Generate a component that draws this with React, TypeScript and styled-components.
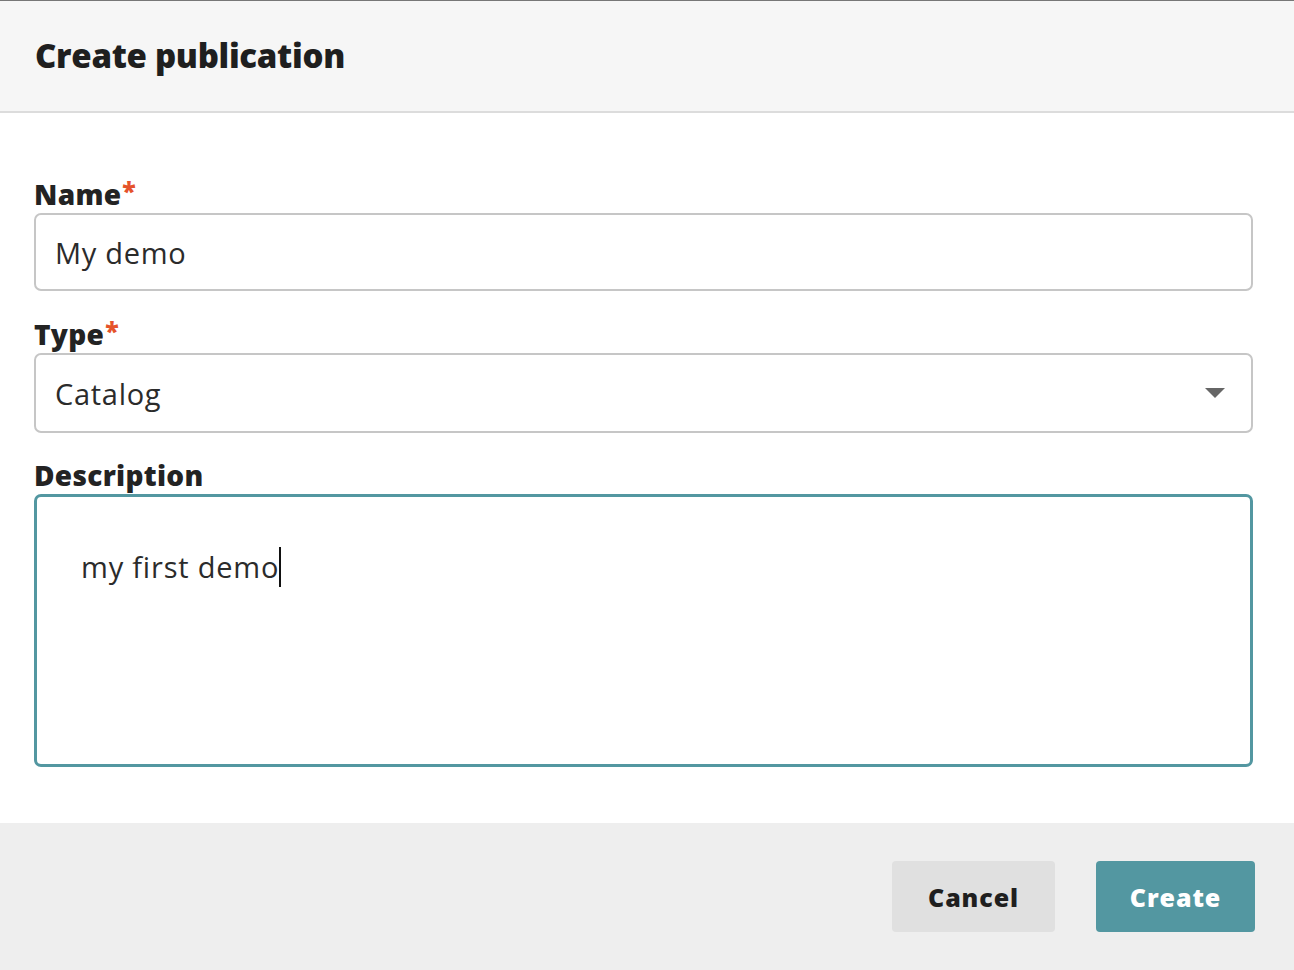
import React from "react";
import styled, { createGlobalStyle } from "styled-components";

const GlobalStyle = createGlobalStyle`
  html, body {
    margin: 0;
    padding: 0;
    background: #ffffff;
  }
  body {
    font-family: "Open Sans", "Noto Sans", sans-serif;
    color: #222222;
  }
  * { box-sizing: border-box; }
`;

const Dialog = styled.div`
  display: flex;
  flex-direction: column;
  width: 100%;
  height: 970px;
  border-top: 1px solid #777777;
  background: #ffffff;
`;

const Header = styled.header`
  flex-shrink: 0;
  display: flex;
  align-items: center;
  height: 112px;
  padding: 0 35px 2px;
  background: #f6f6f6;
  border-bottom: 2px solid #dcdcdc;
`;

const Title = styled.h1`
  margin: 0;
  font-size: 33px;
  font-weight: 800;
  color: #1f1f1f;
  letter-spacing: -0.3px;
`;

const Body = styled.div`
  flex-shrink: 0;
  display: flex;
  flex-direction: column;
  padding: 64px 41px 56px 34px;
`;

const Label = styled.label<{ $top?: number }>`
  display: block;
  margin: ${(p) => p.$top ?? 0}px 0 2px;
  height: 34px;
  line-height: 34px;
  font-size: 28px;
  font-weight: 800;
  letter-spacing: 0.3px;
  color: #232323;
`;

const Required = styled.span`
  color: #e5532b;
  font-size: 25px;
  font-weight: 800;
  vertical-align: top;
  line-height: 26px;
  margin-left: 1px;
`;

const Field = styled.div<{ $h: number }>`
  position: relative;
  flex-shrink: 0;
  display: flex;
  align-items: center;
  height: ${(p) => p.$h}px;
  padding: 0 19px;
  border: 2px solid #c6c6c6;
  border-radius: 7px;
  font-size: 29px;
  letter-spacing: 0.7px;
  color: #2b2b2b;
`;

const Caret = styled.span`
  position: absolute;
  right: 26px;
  top: 50%;
  width: 0;
  height: 0;
  margin-top: -5px;
  border-left: 10px solid transparent;
  border-right: 10px solid transparent;
  border-top: 10px solid #666666;
`;

const TextArea = styled.div`
  flex-shrink: 0;
  height: 273px;
  padding: 50px 44px;
  border: 3px solid #5397a1;
  border-radius: 7px;
  font-size: 29px;
  line-height: 40px;
  letter-spacing: 0.8px;
  color: #2b2b2b;
`;

const Cursor = styled.span`
  display: inline-block;
  width: 2px;
  height: 40px;
  vertical-align: top;
  background: #111111;
`;

const Footer = styled.footer`
  display: flex;
  justify-content: flex-end;
  align-items: flex-start;
  gap: 41px;
  flex: 1;
  padding: 38px 39px 0 0;
  background: #eeeeee;
`;

const Button = styled.button<{ $primary?: boolean; $w: number }>`
  width: ${(p) => p.$w}px;
  height: 71px;
  border: none;
  border-radius: 4px;
  font-family: inherit;
  font-size: 25px;
  font-weight: 800;
  letter-spacing: 0.9px;
  cursor: pointer;
  background: ${(p) => (p.$primary ? "#5397a1" : "#e0e0e0")};
  color: ${(p) => (p.$primary ? "#ffffff" : "#1f1f1f")};
`;

export default function App() {
  return (
    <>
      <GlobalStyle />
      <Dialog>
        <Header>
          <Title>Create publication</Title>
        </Header>
        <Body>
          <Label>
            Name<Required>*</Required>
          </Label>
          <Field $h={78}>My demo</Field>
          <Label $top={26}>
            Type<Required>*</Required>
          </Label>
          <Field $h={80}>
            Catalog
            <Caret />
          </Field>
          <Label $top={25}>Description</Label>
          <TextArea>
            my first demo
            <Cursor />
          </TextArea>
        </Body>
        <Footer>
          <Button $w={163}>Cancel</Button>
          <Button $primary $w={159}>
            Create
          </Button>
        </Footer>
      </Dialog>
    </>
  );
}
